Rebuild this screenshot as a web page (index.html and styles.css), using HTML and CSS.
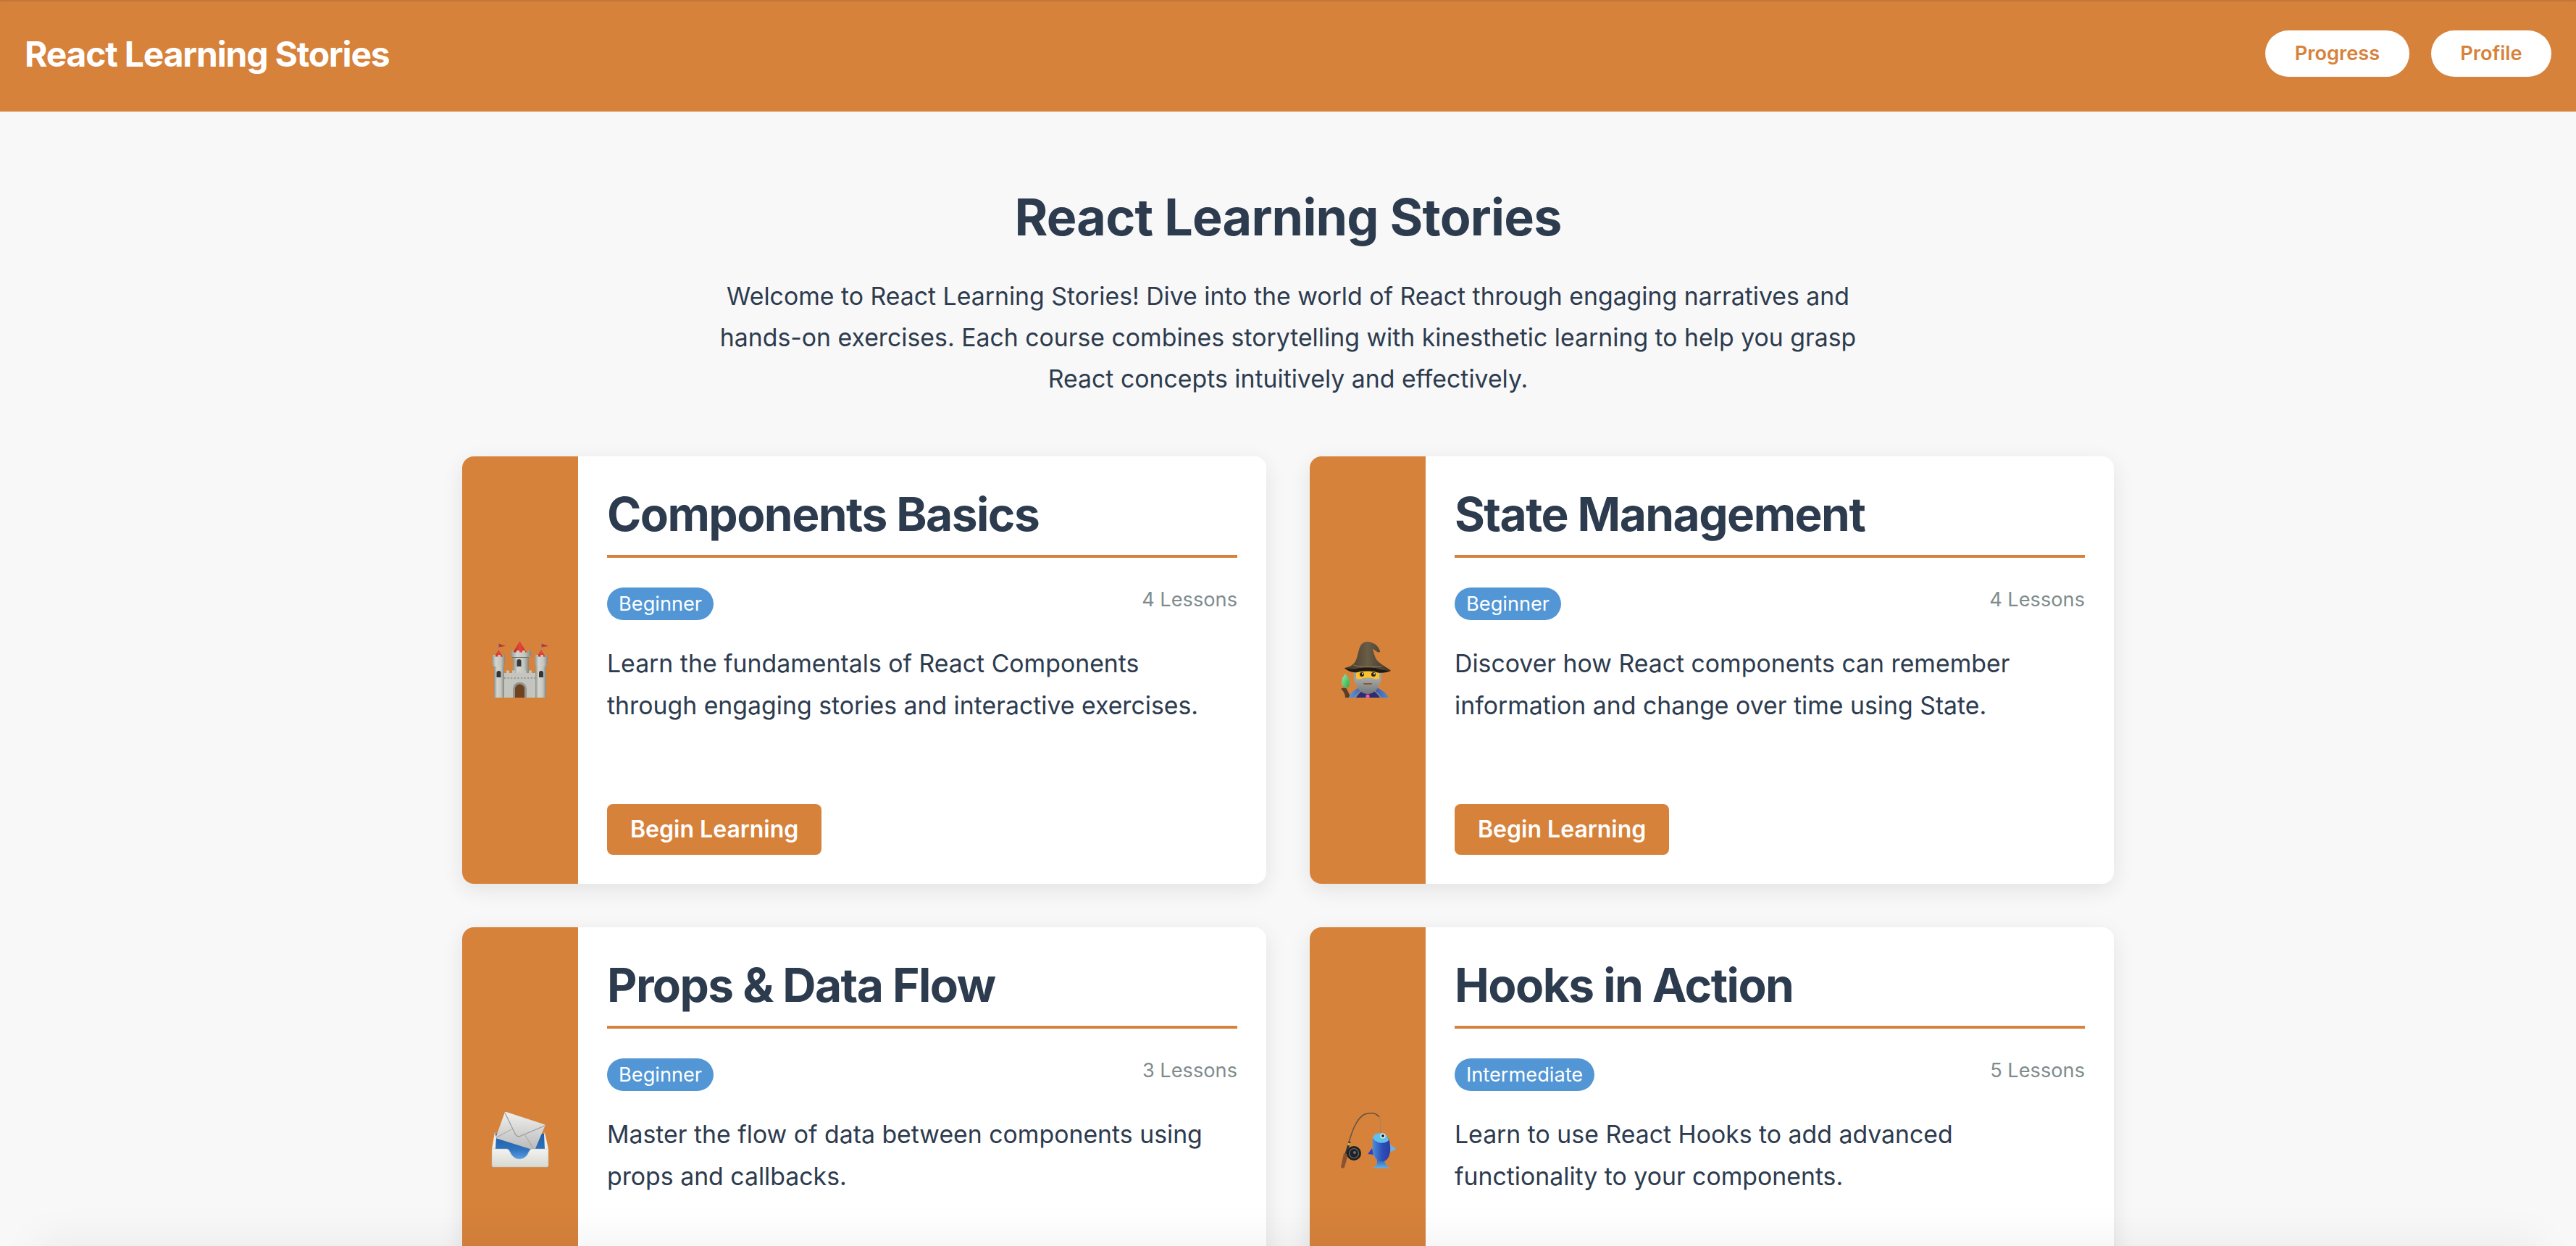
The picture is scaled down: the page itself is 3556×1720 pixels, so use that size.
FILE: index.html
```html
<!DOCTYPE html>
<html lang="en">
<head>
<meta charset="utf-8">
<title>React Learning Stories</title>
<link rel="stylesheet" href="styles.css">
</head>
<body>
<header class="topbar">
  <div class="brand">React Learning Stories</div>
  <nav class="nav">
    <a class="nav-btn">Progress</a>
    <a class="nav-btn">Profile</a>
  </nav>
</header>
<main class="main">
  <section class="hero">
    <h1 class="hero-title">React Learning Stories</h1>
    <p class="hero-text">Welcome to React Learning Stories! Dive into the world of React through engaging narratives and hands-on exercises. Each course combines storytelling with kinesthetic learning to help you grasp React concepts intuitively and effectively.</p>
  </section>
  <section class="grid">
    <article class="card">
      <div class="card-side">
        <svg class="emoji" viewBox="0 0 80 80" aria-label="castle">
          <defs>
            <linearGradient id="stone" x1="0" x2="1" y1="0" y2="0"><stop offset="0" stop-color="#8f918b"/><stop offset=".3" stop-color="#d4d5cf"/><stop offset=".7" stop-color="#c3c4be"/><stop offset="1" stop-color="#84867f"/></linearGradient>
            <linearGradient id="roof" x1="0" x2="1" y1="0" y2="0"><stop offset="0" stop-color="#a92a22"/><stop offset=".5" stop-color="#e8453a"/><stop offset="1" stop-color="#b5312a"/></linearGradient>
          </defs>
          <path d="M10 3v10M69 3v10" stroke="#9b8f86" stroke-width="1.200"/>
          <path d="M10.600 3.500l9.500 3.300-9.500 1.700zM69.600 3.500l9.800 3.300-9.800 1.700z" fill="#b93a33"/>
          <path d="M39.500 0L30 16h19z" fill="url(#roof)"/>
          <path d="M30 45V20h22v25z" fill="url(#stone)"/>
          <path d="M27 13h4v2.500h4V13h4v2.500h4V13h4v2.500h4V13h4v7.500l-3 3H30l-3-3z" fill="url(#stone)"/>
          <path d="M29 22.500h23" stroke="#6f706b" stroke-width="1"/>
          <path d="M35.500 35v-7a3 3 0 0 1 6 0v7z" fill="#37383a"/>
          <path d="M17 78V44h4v-3.500h4V44h4v-3.500h4V44h4v-2h3.500v2H44v-3.500h4V44h4v-3.500h4V44h6v34z" fill="#c4c5bf"/>
          <path d="M18 51h44" stroke="#85867f" stroke-width="1.600" stroke-dasharray="2 2.600"/>
          <path d="M10.300 12L4 23h13z" fill="url(#roof)"/>
          <path d="M4 78V34h14v44z" fill="url(#stone)"/>
          <path d="M1 19h5v2.500h3.500V19h3.500v2.500h3V19h3v13l-3 3H4l-3-3z" fill="url(#stone)"/>
          <path d="M7.500 50v-6a3 3 0 0 1 6 0v6z" fill="#333437"/>
          <path d="M69 12l-6.500 11h13z" fill="url(#roof)"/>
          <path d="M61 78V34h15v44z" fill="url(#stone)"/>
          <path d="M60 19h5v2.500h3.500V19h3.500v2.500h3V19h3v13l-3 3H63l-3-3z" fill="url(#stone)"/>
          <path d="M66 50v-6a3 3 0 0 1 6 0v6z" fill="#333437"/>
          <path d="M30 78V66a9.500 9.500 0 0 1 19 0v12z" fill="#94958f"/>
          <path d="M33 78V66a6.500 6.500 0 0 1 13 0v12z" fill="#6f4320"/>
        </svg>
      </div>
      <div class="card-body">
        <h2 class="card-title">Components Basics</h2>
        <div class="card-meta">
          <span class="badge">Beginner</span>
          <span class="lessons">4 Lessons</span>
        </div>
        <p class="card-text">Learn the fundamentals of React Components through engaging stories and interactive exercises.</p>
        <a class="begin">Begin Learning</a>
      </div>
    </article>
    <article class="card">
      <div class="card-side">
        <svg class="emoji" viewBox="0 0 80 80" aria-label="mage">
          <defs>
            <linearGradient id="hat" x1="0" x2="1" y1="0" y2="0"><stop offset="0" stop-color="#3d3528"/><stop offset=".5" stop-color="#6a5d47"/><stop offset="1" stop-color="#3a3226"/></linearGradient>
            <linearGradient id="cape" x1="0" x2="1" y1="0" y2="0"><stop offset="0" stop-color="#5b9bd8"/><stop offset=".5" stop-color="#3b3f9c"/><stop offset="1" stop-color="#4e8fd0"/></linearGradient>
            <linearGradient id="gem" x1="0" x2="1" y1="0" y2="1"><stop offset="0" stop-color="#9cecab"/><stop offset="1" stop-color="#27a844"/></linearGradient>
            <linearGradient id="beard" x1="0" x2="0" y1="0" y2="1"><stop offset="0" stop-color="#a9abab"/><stop offset="1" stop-color="#74777a"/></linearGradient>
          </defs>
          <path d="M3 66c3-2 7-2 8 0l6 12H9c0-4-2-9-6-12z" fill="#5a3d28"/>
          <path d="M9 45l6 8-1 10-6 2-4-6 1-8z" fill="url(#gem)"/>
          <path d="M14 78c2-8 11-13 19-16l7 3 7-3c9 3 18 8 22 16z" fill="url(#cape)"/>
          <path d="M24 78l11-13h10l12 13z" fill="#2e2c6e"/>
          <path d="M22 78c3-6 8-9 12-12M58 78c-3-6-8-9-12-12" fill="none" stroke="#c9a23c" stroke-width="1"/>
          <circle cx="40" cy="76" r="2.600" fill="#e25fb4"/>
          <path d="M21 38h38v14c0 5-3 8-6 8H27c-3 0-6-3-6-8z" fill="#9a9fa2"/>
          <path d="M24 38h32v18a16 14 0 0 1-32 0z" fill="#fbc22e"/>
          <path d="M23 50c2 3 6 3 8 2 3-2 15-2 18 0 2 1 6 1 8-2 1 13-7 23-17 23s-18-10-17-23z" fill="url(#beard)"/>
          <path d="M34 58h12c0 1-1 2-2 2h-8c-1 0-2-1-2-2z" fill="#8a5a1e"/>
          <circle cx="32" cy="46" r="3" fill="#2a2016"/>
          <circle cx="48" cy="46" r="3" fill="#2a2016"/>
          <circle cx="33" cy="45" r="1" fill="#fff"/>
          <circle cx="49" cy="45" r="1" fill="#fff"/>
          <path d="M27 41h9M44 41h9" stroke="#a56b1b" stroke-width="1.400"/>
          <path d="M8 37c7-1 13-4 16-11 3-7 3-15 7-21 3-4 7-5 11-4 5 1 9 3 12 7 2 3 3 5 3 7l-3 .5-7-5c1 4 2 8 4 13 3 6 11 10 21 17-8 3-15 1-18 0-5-2-23-2-29 0-4 1-11 1-17-3z" fill="url(#hat)"/>
          <path d="M20 33c12 3 28 3 40 2" fill="none" stroke="#93714c" stroke-width="1.200"/>
          <path d="M8 37c6 2 13 2 17 1 6-2 24-2 29 0 3 1 10 3 18 3-5 2-12 4-20 2-6-2-20-2-26 0-6 1-13-1-18-6z" fill="#1d1a14"/>
        </svg>
      </div>
      <div class="card-body">
        <h2 class="card-title">State Management</h2>
        <div class="card-meta">
          <span class="badge">Beginner</span>
          <span class="lessons">4 Lessons</span>
        </div>
        <p class="card-text">Discover how React components can remember information and change over time using State.</p>
        <a class="begin">Begin Learning</a>
      </div>
    </article>
    <article class="card">
      <div class="card-side">
        <svg class="emoji" viewBox="0 0 80 80" aria-label="incoming mail">
          <defs>
            <linearGradient id="env" x1="0" x2="0" y1="0" y2="1"><stop offset="0" stop-color="#f0f0ef"/><stop offset="1" stop-color="#b9b9b9"/></linearGradient>
            <linearGradient id="blue" x1="0" x2="0" y1="0" y2="1"><stop offset="0" stop-color="#1f5fa8"/><stop offset=".6" stop-color="#2f72bd"/><stop offset="1" stop-color="#5ea0ea"/></linearGradient>
            <linearGradient id="tray" x1="0" x2="0" y1="0" y2="1"><stop offset="0" stop-color="#f2f2ee"/><stop offset="1" stop-color="#d8d8d3"/></linearGradient>
          </defs>
          <path d="M5 30h70v36H5z" fill="url(#blue)"/>
          <path d="M19 0a2 2 0 0 1 2 0l52 17a2 2 0 0 1 1 3L60 53 6 36z" fill="url(#env)"/>
          <path d="M19 1l14 29c1 3 5 5 8 3l33-14" fill="none" stroke="#9a9a9a" stroke-width="1.200"/>
          <path d="M6 36l22-12M46 31l14 22" fill="none" stroke="#a3a3a3" stroke-width="1"/>
          <path d="M5 28L1 51h5l1-16z" fill="#efefeb"/>
          <path d="M74 28l5 23h-5l-1-20z" fill="#efefeb"/>
          <path d="M1 51h20c3 0 4 2 6 6 2 4 6 8 12 8s10-4 12-8c2-4 3-6 6-6h22v23a2 2 0 0 1-2 2H3a2 2 0 0 1-2-2z" fill="url(#tray)" stroke="#bcbcb7" stroke-width=".5"/>
        </svg>
      </div>
      <div class="card-body">
        <h2 class="card-title">Props &amp; Data Flow</h2>
        <div class="card-meta">
          <span class="badge">Beginner</span>
          <span class="lessons">3 Lessons</span>
        </div>
        <p class="card-text">Master the flow of data between components using props and callbacks.</p>
        <a class="begin">Begin Learning</a>
      </div>
    </article>
    <article class="card">
      <div class="card-side">
        <svg class="emoji" viewBox="0 0 80 80" aria-label="fishing pole">
          <defs>
            <linearGradient id="fish" x1="0" x2="1" y1="0" y2="0"><stop offset="0" stop-color="#4a8fdc"/><stop offset=".55" stop-color="#2d4db8"/><stop offset="1" stop-color="#2a3fa0"/></linearGradient>
            <linearGradient id="tail" x1="0" x2="0" y1="0" y2="1"><stop offset="0" stop-color="#2f62bd"/><stop offset="1" stop-color="#5fb6e6"/></linearGradient>
          </defs>
          <path d="M14 42C18 28 24 9 36 3c6-2 15-3 20 4" fill="none" stroke="#5d5544" stroke-width="1.500"/>
          <path d="M57 8c1 7 1 14 0 22" fill="none" stroke="#94836b" stroke-width=".8"/>
          <path d="M10 58l5-17" stroke="#38342e" stroke-width="3"/>
          <path d="M12.500 44l3 1" stroke="#d7b54a" stroke-width="3"/>
          <path d="M7 57l6 2-5 17c-1 2-4 2-5 0z" fill="#8c5230"/>
          <circle cx="21" cy="57" r="10" fill="#1f2124"/>
          <circle cx="21" cy="57" r="6.500" fill="none" stroke="#6a6d70" stroke-width="1.200"/>
          <circle cx="22" cy="56" r="2" fill="#6b6f72"/>
          <path d="M46 50l-6 8 8 1z" fill="#3242c8"/>
          <path d="M68 42l11 9c-3 3-7 4-11 4z" fill="#6cb3e4"/>
          <path d="M50 60l-2 3 6-1z" fill="#57a6dd"/>
          <path d="M53 66h10l1 5c2 3 4 5 6 6-3 1-6 1-8 0-2 1-3 1-5 0-3 1-7 1-10 0 3-1 5-4 6-6z" fill="url(#tail)"/>
          <path d="M47 38c1-6 6-9 11-9s10 4 12 11c2 9 2 19-3 25-3 4-10 4-14 1-6-5-7-18-6-28z" fill="url(#fish)"/>
          <path d="M47 35c1-4 6-6 11-6 6 0 10 4 11 10-3 4-12 5-16 2-3-1-5-3-6-6z" fill="#5fc1e8"/>
          <circle cx="61" cy="33" r="3.600" fill="#f2f6f8"/>
          <circle cx="61" cy="33" r="2" fill="#15181c"/>
        </svg>
      </div>
      <div class="card-body">
        <h2 class="card-title">Hooks in Action</h2>
        <div class="card-meta">
          <span class="badge">Intermediate</span>
          <span class="lessons">5 Lessons</span>
        </div>
        <p class="card-text">Learn to use React Hooks to add advanced functionality to your components.</p>
        <a class="begin">Begin Learning</a>
      </div>
    </article>
  </section>
</main>
<div class="edge-shadow"></div>
</body>
</html>
```

FILE: styles.css
```css
* { box-sizing: border-box; }
html, body { height: 100%; overflow: hidden; }
body {
  margin: 0;
  background: #f8f8f8;
  color: #2d3b4e;
  font-family: Inter, "Noto Sans", sans-serif;
  line-height: 1.8;
}
.topbar {
  height: 154px;
  padding: 0 34px 4px;
  display: flex;
  align-items: center;
  justify-content: space-between;
  background: #d6823b;
  box-shadow: inset 0 3px 3px -2px rgba(0, 0, 0, .14);
}
.brand {
  font-size: 48px;
  font-weight: 650;
  letter-spacing: -1.2px;
  line-height: 1;
  color: #fff;
}
.nav { display: flex; gap: 30px; margin-bottom: 2px; }
.nav-btn {
  height: 64px;
  padding: 0 40.5px;
  display: flex;
  align-items: center;
  border-radius: 32px;
  background: #fff;
  color: #d6823b;
  font-size: 27.2px;
  font-weight: 600;
}
.main { padding: 104px 60px 60px; }
.hero { display: flex; flex-direction: column; align-items: center; }
.hero-title {
  margin: 0;
  font-size: 70px;
  font-weight: 700;
  letter-spacing: -.8px;
  line-height: 1.2;
}
.hero-text {
  width: 1600px;
  margin: 38px 0 79px;
  font-size: 33.8px;
  line-height: 57px;
  text-align: center;
}
.grid {
  width: 2280px;
  margin: 0 auto;
  display: grid;
  grid-template-columns: 1fr 1fr;
  gap: 60px;
}
.card {
  height: 590px;
  display: flex;
  border-radius: 16px;
  overflow: hidden;
  background: #fff;
  box-shadow: 0 8px 30px rgba(0, 0, 0, .09);
}
.card-side {
  flex: 0 0 160px;
  display: flex;
  align-items: center;
  justify-content: center;
  background: #d6823b;
}
.emoji { width: 80px; height: 80px; display: block; }
.card-body {
  flex: 1;
  padding: 42px 40px 40px;
  display: flex;
  flex-direction: column;
}
.card-title {
  margin: 0;
  padding-bottom: 18px;
  border-bottom: 4px solid #d6823b;
  font-size: 64px;
  font-weight: 650;
  letter-spacing: -1.55px;
  line-height: 76px;
}
.card-meta {
  margin-top: 41px;
  display: flex;
  justify-content: space-between;
  align-items: flex-start;
}
.badge {
  height: 45px;
  padding: 0 16px;
  border-radius: 23px;
  background: #5296d5;
  color: #fff;
  font-size: 27.2px;
  line-height: 45px;
}
.lessons {
  color: #7f8c8d;
  font-size: 27.2px;
  line-height: 34px;
}
.card-text {
  max-width: 860px;
  margin: 31px 0 0;
  font-size: 33.8px;
  line-height: 57.6px;
}
.begin {
  margin-top: auto;
  align-self: flex-start;
  height: 70px;
  padding: 0 32px;
  display: flex;
  align-items: center;
  border-radius: 8px;
  background: #d6823b;
  color: #fff;
  font-size: 32px;
  font-weight: 600;
}
.edge-shadow {
  position: fixed;
  left: 60px;
  right: 60px;
  top: 100%;
  height: 40px;
  box-shadow: 0 0 60px 8px rgba(0, 0, 0, .06);
}
```
